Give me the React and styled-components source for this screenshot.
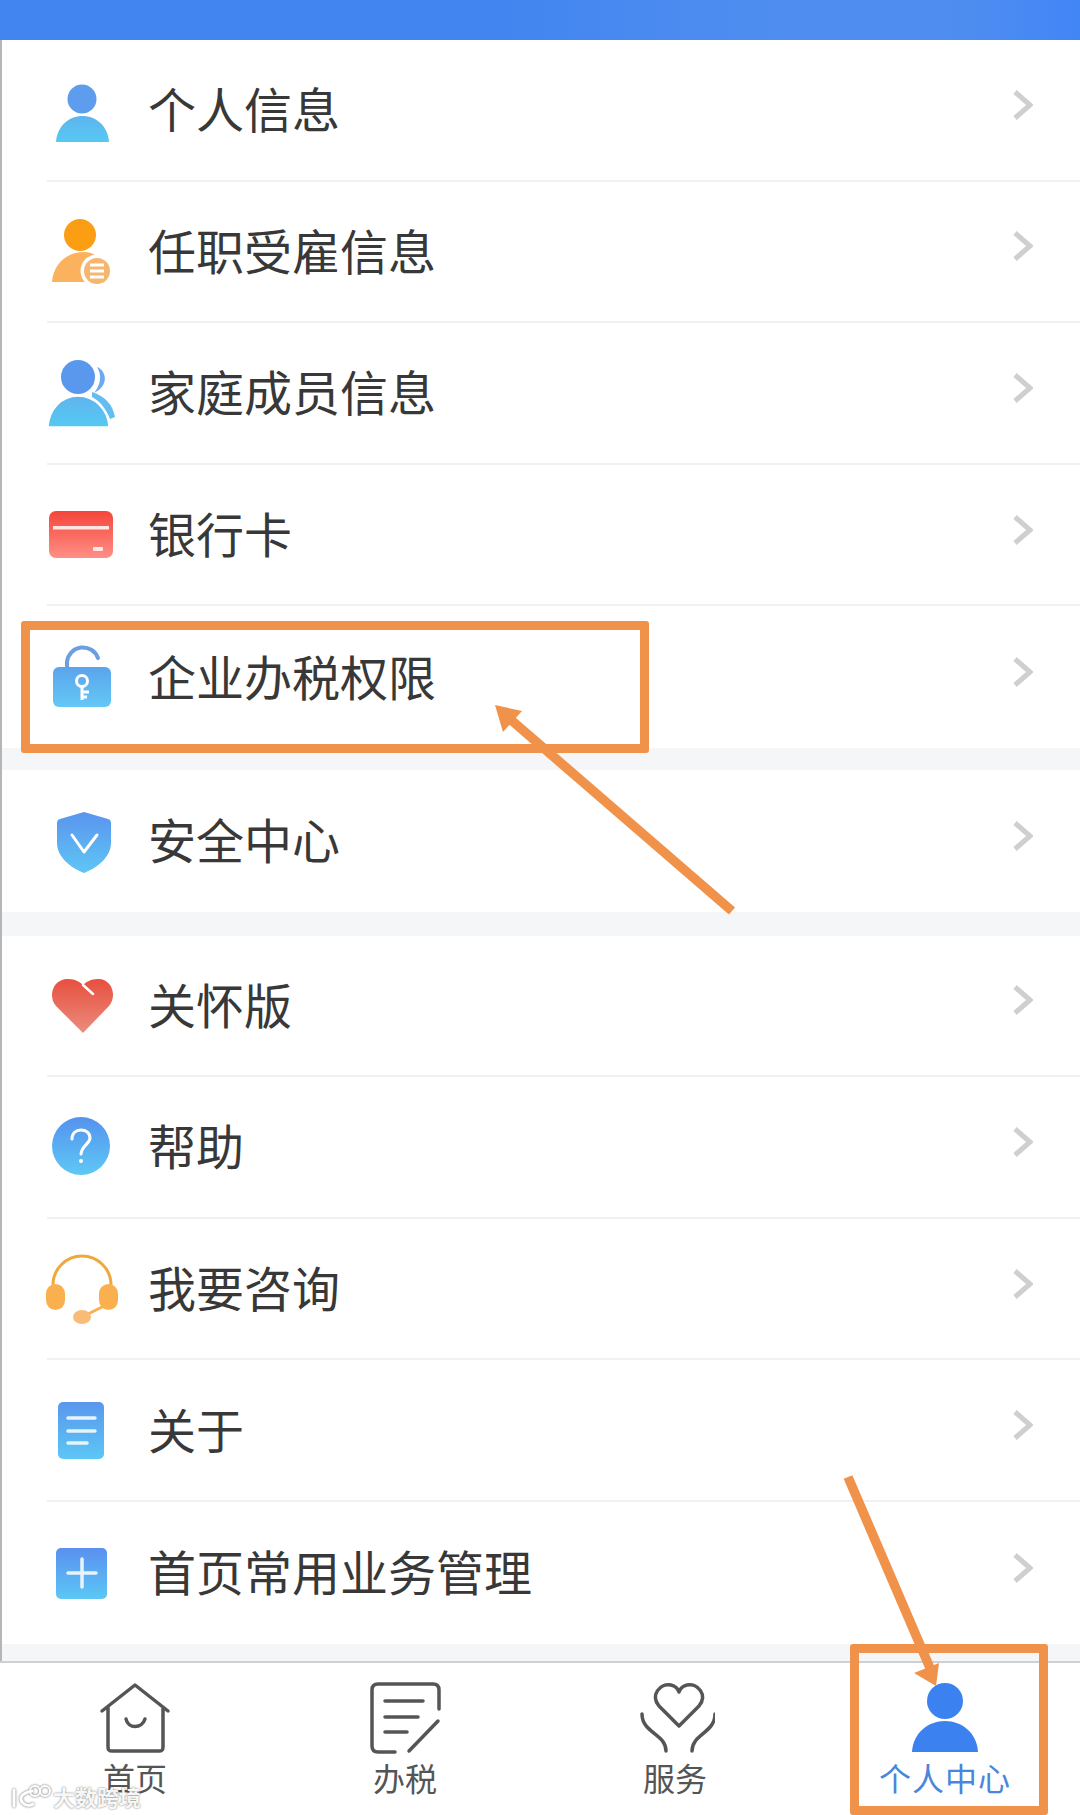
import React from "react";
import styled, { createGlobalStyle } from "styled-components";

const ORANGE = "#f0924a";
const CJK = `"Noto Sans CJK SC", "Noto Sans", sans-serif`;

const GlobalStyle = createGlobalStyle`
  html, body {
    margin: 0;
    padding: 0;
    background: #fff;
    font-family: ${CJK};
  }
`;

const Page = styled.div`
  position: relative;
  width: 1080px;
  height: 1815px;
  overflow: hidden;
  background: #fff;
`;

const TopBar = styled.div`
  height: 40px;
  background: linear-gradient(90deg, #4285f0 0%, #4285f0 45%, #4f8ef0 72%, #4f8ef0 88%, #4285f5 100%);
`;

const Content = styled.div`
  border-left: 2px solid #b6b6b6;
  height: 1775px;
  display: flex;
  flex-direction: column;
`;

const Gap = styled.div`
  height: ${(p) => p.$size}px;
  background: #f5f6f8;
`;

const Row = styled.div`
  box-sizing: border-box;
  height: 141.6px;
  margin-left: 45px;
  padding-right: 47px;
  display: flex;
  align-items: center;
  border-bottom: ${(p) => (p.$last ? "none" : "2px solid #f0f1f2")};
`;

const IconSvg = styled.svg`
  flex: none;
  width: 80px;
  height: 80px;
  margin-left: -5px;
  margin-right: 26px;
`;

const Label = styled.div`
  flex: 1;
  font-size: 48px;
  line-height: 1;
  color: #383838;
  margin-bottom: 5px;
`;

const Chevron = styled.svg`
  flex: none;
  width: 20px;
  height: 30px;
  margin-bottom: 10px;
`;

const Nav = styled.nav`
  flex: 1;
  display: grid;
  grid-template-columns: repeat(4, 270px);
  margin-left: -2px;
  border-top: 2px solid #cfd0d3;
  background: #fff;
`;

const NavItem = styled.div`
  display: flex;
  flex-direction: column;
  align-items: center;
  padding-top: 16px;
  color: ${(p) => (p.$active ? "#4a86dc" : "#555")};
`;

const NavSvg = styled.svg`
  width: 80px;
  height: 80px;
`;

const NavLabel = styled.div`
  font-size: 32px;
  line-height: 38px;
  margin-top: -1px;
  letter-spacing: ${(p) => (p.$wide ? "1px" : "0")};
`;

const Callout = styled.div`
  position: absolute;
  box-sizing: border-box;
  left: ${(p) => p.$x}px;
  top: ${(p) => p.$y}px;
  width: ${(p) => p.$w}px;
  height: ${(p) => p.$h}px;
  border: 9px solid ${ORANGE};
  border-radius: 3px;
`;

const ArrowLayer = styled.svg`
  position: absolute;
  left: 0;
  top: 0;
  width: 1080px;
  height: 1815px;
  pointer-events: none;
`;

const Watermark = styled.div`
  position: absolute;
  left: 10px;
  top: 1781px;
  display: flex;
  align-items: center;
  gap: 2px;
  color: rgba(255, 255, 255, 0.95);
  font-size: 22px;
  line-height: 30px;
  font-weight: 700;
  text-shadow: 0 0 2px rgba(60, 60, 60, 0.75);
`;

const WatermarkLogo = styled.svg`
  width: 41px;
  height: 26px;
  filter: drop-shadow(0 0 1px rgba(60, 60, 60, 0.8));
`;

const Grad = ({ id, from, to }) => (
  <defs>
    <linearGradient id={id} x1="0" y1="0" x2="0" y2="1">
      <stop offset="0" stopColor={from} />
      <stop offset="1" stopColor={to} />
    </linearGradient>
  </defs>
);

const PersonIcon = () => (
  <IconSvg viewBox="0 0 80 80">
    <circle cx="40" cy="29" r="14.5" fill="#5e9cee" />
    <Grad id="g-person" from="#5fb4ee" to="#55c9f3" />
    <path d="M14 72C15 56 27 46 40.5 46S66 56 67 72Z" fill="url(#g-person)" />
  </IconSvg>
);

const EmployIcon = () => (
  <IconSvg viewBox="0 0 80 80">
    <circle cx="38" cy="24" r="16" fill="#fb9e14" />
    <path d="M10 71C11 55 23 41 42 41C52 41 58 47 60 53L50 71Z" fill="#fbb25e" />
    <circle cx="55" cy="60" r="16.5" fill="#fff" />
    <circle cx="55" cy="60" r="13" fill="#f5b670" />
    <path d="M48 54H62M48 60H62M48 66H62" stroke="#fff" strokeWidth="3" />
  </IconSvg>
);

const FamilyIcon = () => (
  <IconSvg viewBox="0 0 80 80">
    <path d="M55 14C65 18 67 33 52 40C59 31 60 22 55 14Z" fill="#6aaaf0" />
    <path d="M50 39C63 43 71 52 73 64L68 66C64 56 58 48 50 44Z" fill="#62bdf0" />
    <circle cx="36" cy="24" r="18" fill="#5a98ee" stroke="#fff" strokeWidth="2" />
    <Grad id="g-family" from="#5fb4ee" to="#55c9f3" />
    <path d="M6 74C7 56 20 43 36 43S66 56 67 74Z" fill="url(#g-family)" stroke="#fff" strokeWidth="1.500" />
  </IconSvg>
);

const CardIcon = () => (
  <IconSvg viewBox="0 0 80 80">
    <Grad id="g-card" from="#f5463a" to="#ff8f86" />
    <rect x="7" y="16" width="64" height="47" rx="7" fill="url(#g-card)" />
    <rect x="11" y="31" width="56" height="3.5" fill="#ffe6e2" />
    <rect x="51" y="52" width="10" height="4" rx="1" fill="#ffe6e2" />
  </IconSvg>
);

const LockIcon = () => (
  <IconSvg viewBox="0 0 80 80">
    <Grad id="g-lock" from="#5aa4ec" to="#64c8f5" />
    <path d="M25 31V25A16 16 0 0 1 56 21" fill="none" stroke="#6c9fe0" strokeWidth="4" strokeLinecap="round" />
    <rect x="11" y="30" width="58" height="40" rx="6" fill="url(#g-lock)" />
    <circle cx="40" cy="44" r="5.5" fill="none" stroke="#fff" strokeWidth="3" />
    <path d="M40 50V63M40 55H47M40 60H45" fill="none" stroke="#fff" strokeWidth="3" />
  </IconSvg>
);

const ShieldIcon = () => (
  <IconSvg viewBox="0 0 80 80">
    <Grad id="g-shield" from="#5a94ee" to="#5fc6f5" />
    <path
      d="M42 11L66 18C68 18.500 69 20 69 22V42C69 56 55 67 42 72C29 67 15 56 15 42V22C15 20 16 18.500 18 18Z"
      fill="url(#g-shield)"
    />
    <path d="M30 34L42 51L55 34" fill="none" stroke="#fff" strokeWidth="3" strokeLinecap="round" strokeLinejoin="round" />
  </IconSvg>
);

const HeartIcon = () => (
  <IconSvg viewBox="0 0 80 80">
    <Grad id="g-heart" from="#e84f3e" to="#ea8d7e" />
    <path
      d="M41 68L14 41C6 32 10 14 26 14C33 14 38 17 41 20C44 17 49 14 56 14C71 14 75 32 67 41Z"
      fill="url(#g-heart)"
    />
    <path d="M41 20L51 29" stroke="#fff" strokeWidth="2.5" strokeLinecap="round" />
  </IconSvg>
);

const HelpIcon = () => (
  <IconSvg viewBox="0 0 80 80">
    <Grad id="g-help" from="#5592ee" to="#5ec8f5" />
    <circle cx="39" cy="39" r="29" fill="url(#g-help)" />
    <path
      d="M30 32C30 26 34 23 39 23C44 23 48 26 48 31C48 37 40 38 39 47"
      fill="none"
      stroke="#fff"
      strokeWidth="3"
      strokeLinecap="round"
    />
    <circle cx="39" cy="54" r="2" fill="#fff" />
  </IconSvg>
);

const HeadsetIcon = () => (
  <IconSvg viewBox="0 0 80 80">
    <path d="M11 38V36A29 29 0 0 1 69 36V38" fill="none" stroke="#f0a83a" strokeWidth="3" />
    <rect x="4" y="35" width="19" height="26" rx="9.500" fill="#fbb04f" />
    <rect x="57" y="35" width="19" height="26" rx="9.500" fill="#fbb04f" />
    <path d="M42 67L60 58" stroke="#fbb04f" strokeWidth="3" />
    <ellipse cx="40" cy="68" rx="9" ry="7" fill="#f8bb78" />
  </IconSvg>
);

const DocIcon = () => (
  <IconSvg viewBox="0 0 80 80">
    <Grad id="g-doc" from="#5a97ee" to="#5cc7f5" />
    <rect x="16" y="12" width="46" height="57" rx="5" fill="url(#g-doc)" />
    <path d="M26 28H53M26 41H53M26 53H45" stroke="#e6f4ff" strokeWidth="3.500" strokeLinecap="round" />
  </IconSvg>
);

const PlusIcon = () => (
  <IconSvg viewBox="0 0 80 80">
    <Grad id="g-plus" from="#5a90f0" to="#5cc7f5" />
    <rect x="14" y="15" width="51" height="51" rx="5" fill="url(#g-plus)" />
    <path d="M26 40H54M40 26V54" stroke="#e6f4ff" strokeWidth="3.500" strokeLinecap="round" />
  </IconSvg>
);

const Arrow = () => (
  <Chevron viewBox="0 0 20 30">
    <path d="M2 2L17 15L2 28" fill="none" stroke="#cfcfcf" strokeWidth="5" />
  </Chevron>
);

const groups = [
  [
    ["个人信息", PersonIcon],
    ["任职受雇信息", EmployIcon],
    ["家庭成员信息", FamilyIcon],
    ["银行卡", CardIcon],
    ["企业办税权限", LockIcon],
  ],
  [["安全中心", ShieldIcon]],
  [
    ["关怀版", HeartIcon],
    ["帮助", HelpIcon],
    ["我要咨询", HeadsetIcon],
    ["关于", DocIcon],
    ["首页常用业务管理", PlusIcon],
  ],
];

const gapSizes = [22, 24, 17];

const navStroke = {
  fill: "none",
  stroke: "#555",
  strokeWidth: 3.5,
  strokeLinecap: "round",
  strokeLinejoin: "round",
};

const HomeNav = () => (
  <NavSvg viewBox="0 0 80 80">
    <path d="M7 32L40 6L73 32M13 28V68C13 71 14 72 17 72H64C67 72 68 71 68 68V28" {...navStroke} />
    <path d="M31 40C33 50 47 50 50 40" {...navStroke} />
  </NavSvg>
);

const TaxNav = () => (
  <NavSvg viewBox="0 0 80 80">
    <path d="M30 73H13C9 73 7 71 7 67V11C7 7 9 5 13 5H68C72 5 74 7 74 11V30" {...navStroke} />
    <path d="M20 22H58M20 38H53M20 53H42M73 42L44 72" {...navStroke} />
  </NavSvg>
);

const ServiceNav = () => (
  <NavSvg viewBox="0 0 80 80">
    <path d="M44 47L24 27C15 16 25 4 36 6C40 7 43 10 44 13C45 10 48 7 52 6C63 4 73 16 64 27Z" {...navStroke} />
    <path d="M7 35C7 54 31 55 31 72M80 35C80 54 57 55 57 72" {...navStroke} />
  </NavSvg>
);

const MineNav = () => (
  <NavSvg viewBox="0 0 80 80">
    <circle cx="40" cy="22" r="18" fill="#3b82f0" />
    <path d="M7 73C8 54 23 42 40 42S72 54 73 73Z" fill="#3b82f0" />
  </NavSvg>
);

const navItems = [
  ["首页", HomeNav],
  ["办税", TaxNav],
  ["服务", ServiceNav],
  ["个人中心", MineNav],
];

export default function App() {
  return (
    <Page>
      <GlobalStyle />
      <TopBar />
      <Content>
        {groups.map((rows, g) => (
          <React.Fragment key={g}>
            {rows.map(([text, Icon], i) => (
              <Row key={text} $last={i === rows.length - 1}>
                <Icon />
                <Label>{text}</Label>
                <Arrow />
              </Row>
            ))}
            <Gap $size={gapSizes[g]} />
          </React.Fragment>
        ))}
        <Nav>
          {navItems.map(([text, Icon], i) => (
            <NavItem key={text} $active={i === 3}>
              <Icon />
              <NavLabel $wide={i === 3}>{text}</NavLabel>
            </NavItem>
          ))}
        </Nav>
      </Content>

      <Callout $x={21} $y={621} $w={628} $h={132} />
      <Callout $x={850} $y={1644} $w={198} $h={171} />
      <ArrowLayer viewBox="0 0 1080 1815">
        <path d="M732 911L510 719" stroke={ORANGE} strokeWidth="9.500" />
        <path d="M495 705L522 711L503 732Z" fill={ORANGE} />
        <path d="M848 1477L930 1668" stroke={ORANGE} strokeWidth="9.500" />
        <path d="M936 1686L914 1673L939 1663Z" fill={ORANGE} />
      </ArrowLayer>

      <Watermark>
        <WatermarkLogo viewBox="0 0 41 26">
          <g fill="none" stroke="#fff" strokeWidth="3" strokeLinecap="round">
            <path d="M4 7V23M22 8C12 10 8 15 13 20C16 23 20 23 23 21" />
          </g>
          <g fill="none" stroke="#fff" strokeWidth="2">
            <circle cx="25" cy="8" r="5" />
            <circle cx="35" cy="8" r="5" />
          </g>
        </WatermarkLogo>
        <span>大数跨境</span>
      </Watermark>
    </Page>
  );
}
